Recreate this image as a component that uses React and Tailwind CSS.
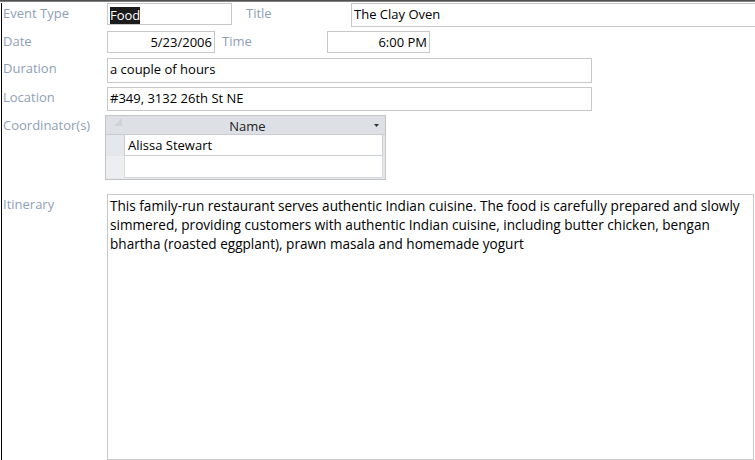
const LABEL = "text-[#8fa0b5] leading-[20px] shrink-0";
const BOX = "border border-[#c8c8c8] bg-white text-black leading-[20px] px-[2px] shrink-0";

function Field({ className = "", children }) {
  return <div className={`${BOX} ${className}`}>{children}</div>;
}

export default function App() {
  return (
    <div
      className="w-[755px] h-[460px] overflow-hidden bg-white text-[13px]"
      style={{ fontFamily: '"Open Sans", "Noto Sans", sans-serif' }}
    >
      {/* top edge of the form window */}
      <div className="h-[2px] bg-gradient-to-b from-[#3a3a3a] to-[#9a9a9a]" />

      <div className="ml-[1px] mt-[1px] h-full border-l border-black pl-[1px] flex flex-col">
        {/* Event type / title */}
        <div className="flex items-start">
          <div className={`${LABEL} w-[104px]`}>Event Type</div>
          <Field className="w-[125px] h-[22px] pt-[1px] leading-[17px]">
            <span className="bg-[#1c1c1c] text-white inline-block leading-[17px]">Food</span>
          </Field>
          <div className={`${LABEL} w-[105px] ml-[14px]`}>Title</div>
          <Field className="w-[420px] h-[24px]">The Clay Oven</Field>
        </div>

        {/* Date / time */}
        <div className="flex items-start mt-[4px]">
          <div className={`${LABEL} w-[104px]`}>Date</div>
          <Field className="w-[108px] h-[22px] text-right">5/23/2006</Field>
          <div className={`${LABEL} w-[105px] ml-[7px]`}>Time</div>
          <Field className="w-[103px] h-[22px] text-right">6:00 PM</Field>
        </div>

        {/* Duration */}
        <div className="flex items-start mt-[5px]">
          <div className={`${LABEL} w-[104px]`}>Duration</div>
          <Field className="w-[485px] h-[25px]">a couple of hours</Field>
        </div>

        {/* Location */}
        <div className="flex items-start mt-[4px]">
          <div className={`${LABEL} w-[104px]`}>Location</div>
          <Field className="w-[485px] h-[24px]">#349, 3132 26th St NE</Field>
        </div>

        {/* Coordinators subform */}
        <div className="flex items-start mt-[4px]">
          <div className={`${LABEL} w-[102px]`}>Coordinator(s)</div>
          <div className="w-[281px] h-[65px] border border-[#c4c4c4] bg-[#e4e7eb] flex flex-col">
            <div className="flex h-[19px] border-b border-[#c9cdd2] bg-[#dde1e6]">
              <div className="w-[18px] flex items-start justify-end pr-[2px] pt-[2px]">
                <svg width="8" height="8" viewBox="0 0 8 8">
                  <path d="M8 0 L8 8 L0 8 Z" fill="#cfd3d8" />
                </svg>
              </div>
              <div className="flex-1 flex items-center justify-center text-[#222] leading-[18px] pl-[4px] pt-[1px]">
                Name
              </div>
              <div className="w-[18px] flex items-center justify-center">
                <svg width="5" height="3" viewBox="0 0 5 3">
                  <path d="M0 0 H5 L2.5 3 Z" fill="#333" />
                </svg>
              </div>
            </div>
            <div className="flex h-[21px]">
              <div className="w-[18px]" />
              <div className="w-[259px] border border-[#c9cdd2] border-t-0 bg-white text-black leading-[19px] pl-[3px] pt-[1px]">
                Alissa Stewart
              </div>
            </div>
            <div className="flex h-[22px]">
              <div className="w-[18px] bg-[#eceef1]" />
              <div className="w-[259px] border border-[#d6d9dd] border-t-0 bg-white" />
            </div>
          </div>
        </div>

        {/* Itinerary */}
        <div className="flex items-start mt-[14px]">
          <div className={`${LABEL} w-[104px]`}>Itinerary</div>
          <div className="w-[647px] h-[266px] border border-[#c8c8c8] bg-white text-black text-[13.6px] leading-[19px] px-[2px] pt-[1px]">
            This family-run restaurant serves authentic Indian cuisine. The food is carefully prepared and slowly
            <br />
            simmered, providing customers with authentic Indian cuisine, including butter chicken, bengan
            <br />
            bhartha (roasted eggplant), prawn masala and homemade yogurt
          </div>
        </div>
      </div>
    </div>
  );
}
